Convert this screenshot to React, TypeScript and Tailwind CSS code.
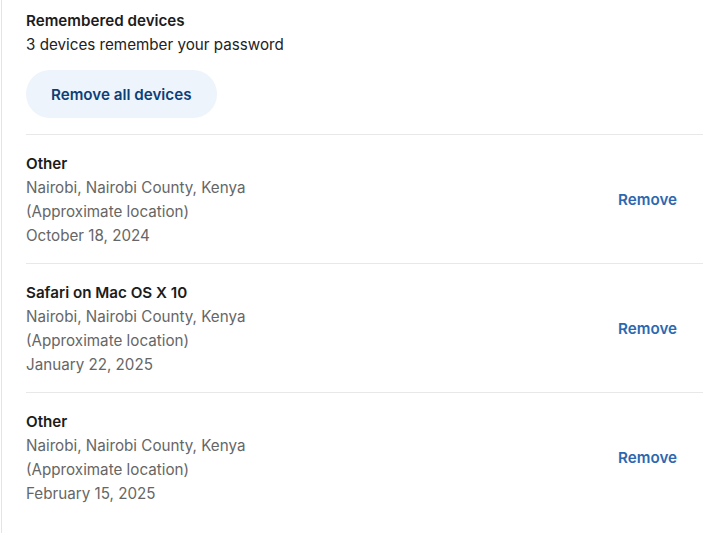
import React from "react";

const devices = [
  { name: "Other", date: "October 18, 2024" },
  { name: "Safari on Mac OS X 10", date: "January 22, 2025" },
  { name: "Other", date: "February 15, 2025" },
];

export default function App() {
  return (
    <div
      className="min-h-[533px] w-[722px] bg-white"
      style={{ fontFamily: "Inter, 'Noto Sans', sans-serif" }}
    >
      <div className="ml-[1px] min-h-[533px] border-l border-[#e4e4e4] pr-[19px]">
        <div className="pl-[24px] pt-[9px] pb-[16px]">
          <div className="text-[15.2px] leading-[24px] font-semibold text-[#1c1c1c]">
            Remembered devices
          </div>
          <div className="text-[15.2px] leading-[24px] text-[#222]">
            3 devices remember your password
          </div>
          <button className="mt-[13px] h-[48px] rounded-full bg-[#eef4fb] px-[25px] pt-[2px] text-[15.2px] font-semibold text-[#0c3f78]">
            Remove all devices
          </button>
        </div>
        <div className="ml-[24px]">
          {devices.map((d, i) => (
            <div
              key={i}
              className="flex items-center justify-between border-t border-[#e8e8e8] pt-[17px] pb-[15px] pr-[26px]"
            >
              <div className="text-[15.2px] leading-[24px]">
                <div className="font-semibold text-[#1c1c1c]">{d.name}</div>
                <div className="text-[#666666]">Nairobi, Nairobi County, Kenya</div>
                <div className="text-[#666666]">(Approximate location)</div>
                <div className="text-[#666666]">{d.date}</div>
              </div>
              <button className="text-[15.2px] font-semibold text-[#2c68b0]">Remove</button>
            </div>
          ))}
        </div>
      </div>
    </div>
  );
}
